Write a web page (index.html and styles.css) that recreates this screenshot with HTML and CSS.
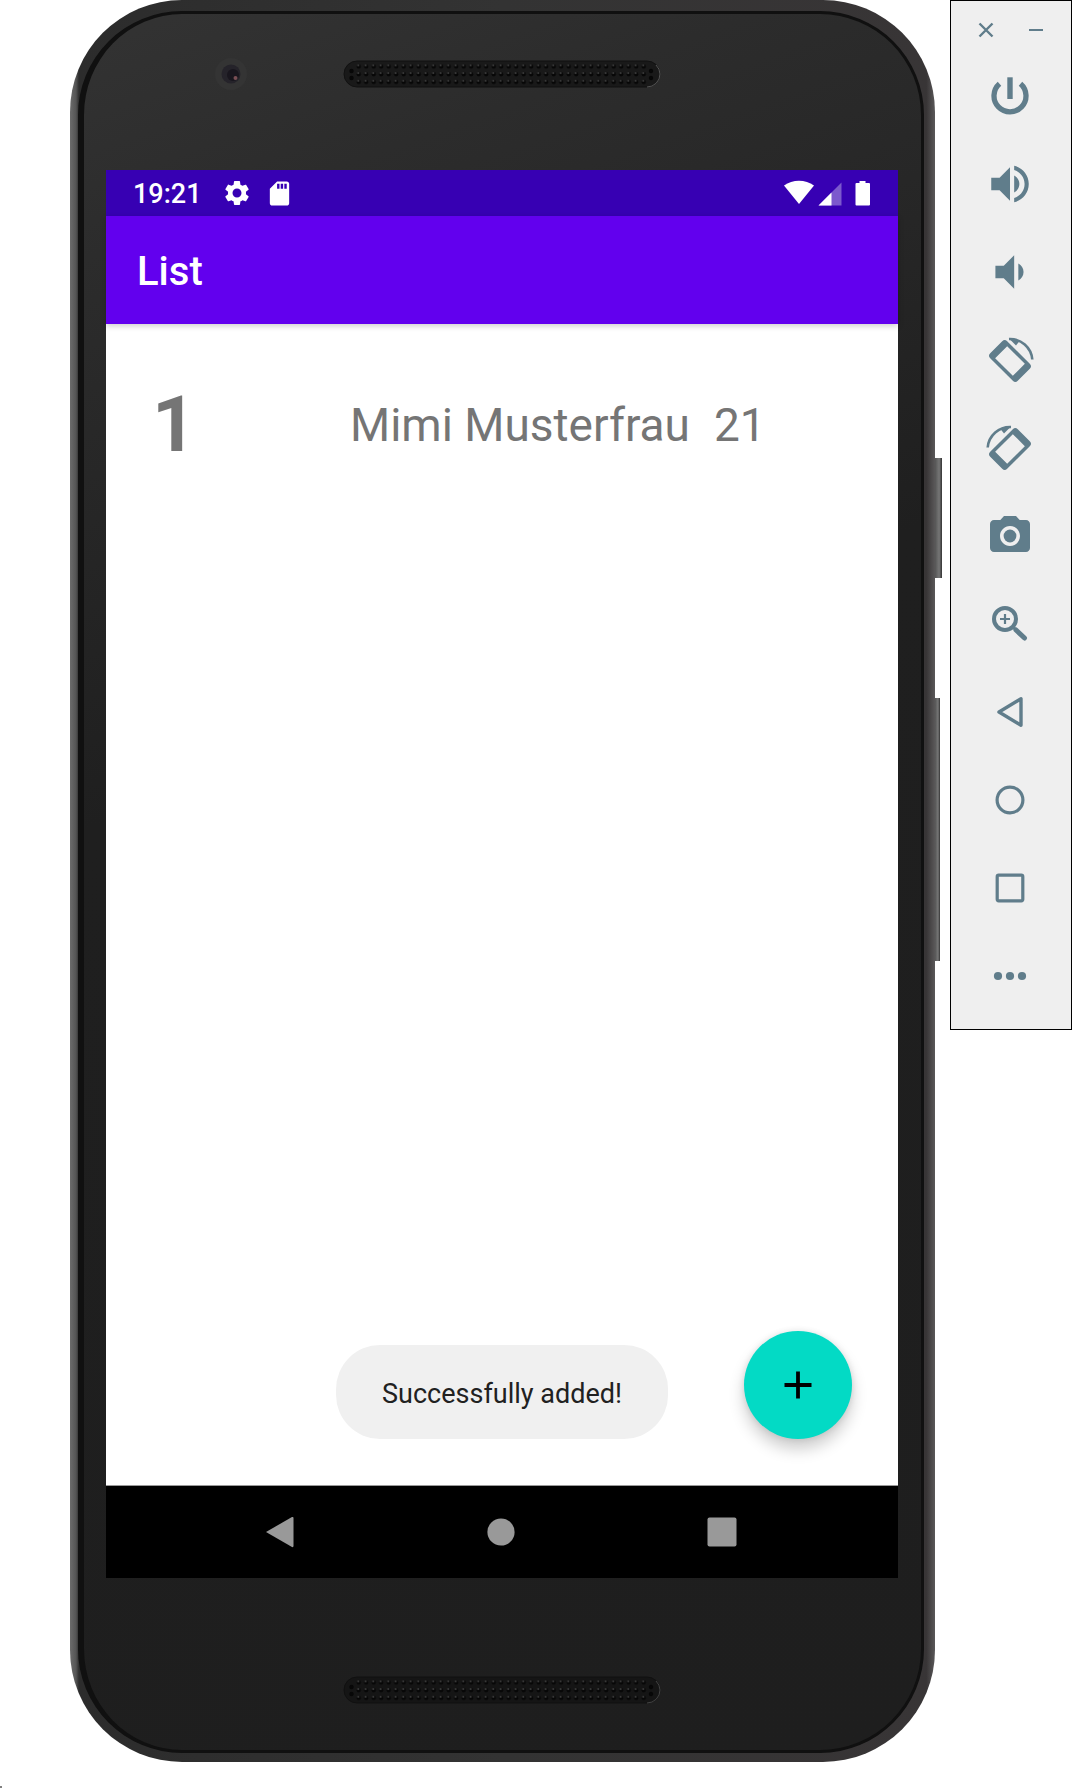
FILE: index.html
```html
<!DOCTYPE html>
<html lang="en">
<head>
<meta charset="utf-8">
<meta name="viewport" content="width=device-width, initial-scale=1">
<title>List</title>
<link rel="stylesheet" href="styles.css">
</head>
<body>
<div class="desktop">
  <div class="phone">
    <span class="side-key side-key-power"></span>
    <span class="side-key side-key-volume"></span>
    <div class="face">
      <div class="bezel bezel-top">
        <svg class="camera" width="34" height="34" viewBox="0 0 34 34" aria-hidden="true">
          <circle cx="17" cy="17" r="16" fill="#343434"/>
          <circle cx="17" cy="17" r="9.500" fill="#25232a"/>
          <circle cx="19" cy="18" r="6" fill="#19161e"/>
          <circle cx="21.500" cy="21" r="2" fill="#7a4f55"/>
        </svg>
        <svg class="speaker" width="318" height="28" viewBox="0 0 318 28" aria-hidden="true">
          <defs>
            <pattern id="holes" x="12" y="2.500" width="7.500" height="7.700" patternUnits="userSpaceOnUse">
              <circle cx="3.700" cy="4" r="2.200" fill="#070707"/>
              <circle cx="3.200" cy="2.900" r="1" fill="#444"/>
            </pattern>
          </defs>
          <rect x="1" y="1" width="316" height="26" rx="13" fill="#191919" stroke="#111"/>
          <path d="M304 27a13 13 0 0 0 13-13a13 13 0 0 0-4-9" fill="none" stroke="#555"/>
          <rect x="12" y="2.500" width="292.500" height="23.100" fill="url(#holes)"/>
          <g fill="#070707"><circle cx="8.500" cy="11" r="2.200"/><circle cx="8.500" cy="18" r="2.200"/><circle cx="308" cy="11" r="2.200"/><circle cx="308" cy="18" r="2.200"/></g>
        </svg>
      </div>
      <main class="screen">
        <div class="status-bar">
          <span class="clock">19:21</span>
          <svg class="status-gear" width="30" height="30" viewBox="0 0 24 24" fill="#fff" aria-hidden="true"><path d="M19.140 12.940c.040-.300.060-.610.060-.940 0-.320-.020-.640-.070-.940l2.030-1.580c.180-.140.230-.410.120-.610l-1.920-3.320c-.120-.220-.370-.290-.590-.220l-2.390.960c-.500-.380-1.030-.700-1.620-.940l-.360-2.540c-.040-.240-.240-.410-.480-.410h-3.840c-.240 0-.430.170-.470.410l-.360 2.540c-.590.240-1.130.570-1.620.940l-2.390-.960c-.220-.080-.470 0-.590.220L2.740 8.870c-.120.210-.080.470.120.610l2.030 1.580c-.050.300-.090.630-.090.940s.020.640.070.940l-2.030 1.580c-.180.140-.230.410-.120.610l1.920 3.320c.120.220.370.290.590.220l2.390-.960c.500.380 1.030.700 1.620.940l.360 2.540c.050.240.240.410.480.410h3.840c.240 0 .440-.170.470-.410l.360-2.540c.590-.240 1.130-.560 1.620-.940l2.390.960c.220.080.470 0 .590-.220l1.920-3.320c.120-.220.070-.470-.120-.610l-2.010-1.580zM12 15.600c-1.980 0-3.600-1.620-3.600-3.600s1.620-3.600 3.600-3.600 3.600 1.620 3.600 3.600-1.620 3.600-3.600 3.600z"/></svg>
          <svg width="29" height="29" viewBox="0 0 24 24" fill="#fff" aria-hidden="true"><path d="M18 2h-8L4 8v12c0 1.100.9 2 2 2h12c1.100 0 2-.9 2-2V4c0-1.100-.9-2-2-2zm-6 6h-2V4h2v4zm3 0h-2V4h2v4zm3 0h-2V4h2v4z"/></svg>
          <svg class="status-right" width="88" height="26" viewBox="0 0 88 26" fill="#fff" aria-hidden="true">
            <path d="M0 5.500C8.500-.8 21.500-.8 30 5.500L15 24z"/>
            <path d="M57.500 2.500V25.500H34.500z" fill-opacity=".35"/><path d="M47.500 12.500V25.500H34.500z"/>
            <path d="M75.500 1h6v2H85q1 0 1 1V24.500q0 1-1 1H72.500q-1 0-1-1V4q0-1 1-1h3z"/>
          </svg>
        </div>
        <header class="app-bar"><h1>List</h1></header>
        <section class="content">
          <ul class="people">
            <li class="person">
              <strong class="person-id">1</strong>
              <span>Mimi Musterfrau</span>
              <span>21</span>
            </li>
          </ul>
          <div class="toast" role="status">Successfully added!</div>
          <button class="fab" type="button" aria-label="Add">
            <svg width="28" height="28" viewBox="-14 -14 28 28" aria-hidden="true"><path d="M0-13.500V13.500M-13.500 0H13.500" stroke="#000" stroke-width="3.800"/></svg>
          </button>
        </section>
        <nav class="nav-bar" aria-label="System">
          <button type="button" aria-label="Back"><svg width="32" height="32" viewBox="-16 -16 32 32"><path d="M-14 0L12-15Q13.500-15.500 13.500-14V14Q13.500 15.500 12 15z" fill="#999"/></svg></button>
          <button type="button" aria-label="Home"><svg width="32" height="32" viewBox="-16 -16 32 32"><circle r="13.600" fill="#999"/></svg></button>
          <button type="button" aria-label="Overview"><svg width="32" height="32" viewBox="-16 -16 32 32"><rect x="-14.500" y="-14.500" width="29" height="29" rx="2" fill="#999"/></svg></button>
        </nav>
      </main>
      <div class="bezel bezel-bottom">
        <svg class="speaker" width="318" height="28" viewBox="0 0 318 28" aria-hidden="true">
          <rect x="1" y="1" width="316" height="26" rx="13" fill="#151515" stroke="#101010"/>
          <path d="M304 27a13 13 0 0 0 13-13a13 13 0 0 0-4-9" fill="none" stroke="#444"/>
          <rect x="12" y="2.500" width="292.500" height="23.100" fill="url(#holes)"/>
          <g fill="#070707"><circle cx="8.500" cy="11" r="2.200"/><circle cx="8.500" cy="18" r="2.200"/><circle cx="308" cy="11" r="2.200"/><circle cx="308" cy="18" r="2.200"/></g>
        </svg>
      </div>
    </div>
  </div>
  <aside class="toolbar" aria-label="Emulator controls">
    <div class="window-keys">
      <button type="button" aria-label="Close"><svg width="16" height="16" viewBox="-8 -8 16 16"><path d="M-6.500-6.500L6.500 6.500M-6.500 6.500L6.500-6.500" stroke="#607d8b" stroke-width="2.400"/></svg></button>
      <button type="button" aria-label="Minimize"><svg width="16" height="16" viewBox="-8 -8 16 16"><path d="M-7 0H7" stroke="#607d8b" stroke-width="2"/></svg></button>
    </div>
    <button class="tool" type="button" aria-label="Power"><svg width="50" height="50" viewBox="-25 -25 50 50"><path d="M-10.500-12.200A16 16 0 1 0 10.500-12.200" fill="none" stroke="#607d8b" stroke-width="5.300"/><path d="M-2.700-18.700h5.400v21.700h-5.400z"/></svg></button>
    <button class="tool" type="button" aria-label="Volume up"><svg width="50" height="50" viewBox="0 0 24 24"><path d="M3 9v6h4l5 5V4L7 9H3zm13.500 3c0-1.770-1.020-3.290-2.500-4.030v8.050c1.480-.730 2.500-2.250 2.500-4.020zM14 3.230v2.060c2.890.860 5 3.540 5 6.710s-2.110 5.850-5 6.710v2.060c4.010-.910 7-4.490 7-8.770s-2.990-7.860-7-8.770z" transform="translate(0 0)"/></svg></button>
    <button class="tool" type="button" aria-label="Volume down"><svg width="50" height="50" viewBox="0 0 24 24"><path d="M18.500 12c0-1.770-1.020-3.290-2.500-4.030v8.050c1.480-.730 2.500-2.250 2.500-4.020zM5 9v6h4l5 5V4L9 9H5z"/></svg></button>
    <button class="tool" type="button" aria-label="Rotate left"><svg width="50" height="50" viewBox="-25 -26 50 50"><path transform="rotate(45)" fill-rule="evenodd" d="M-16-12H16Q19.500-12 19.500-8.500V8.500Q19.500 12 16 12H-16Q-19.500 12-19.500 8.500V-8.500Q-19.500-12-16-12zM-12.500-8.500V8.500H12.500V-8.500z"/><path d="M-1-22A22.500 22.500 0 0 1 22.300-1.500" fill="none" stroke="#607d8b" stroke-width="2.600"/><path d="M-1-22.500L10-20.500L6-15.500z"/></svg></button>
    <button class="tool" type="button" aria-label="Rotate right"><svg width="50" height="50" viewBox="-25 -26 50 50"><g transform="scale(-1 1)"><path transform="rotate(45)" fill-rule="evenodd" d="M-16-12H16Q19.500-12 19.500-8.500V8.500Q19.500 12 16 12H-16Q-19.500 12-19.500 8.500V-8.500Q-19.500-12-16-12zM-12.500-8.500V8.500H12.500V-8.500z"/><path d="M-1-22A22.500 22.500 0 0 1 22.300-1.500" fill="none" stroke="#607d8b" stroke-width="2.600"/><path d="M-1-22.500L10-20.500L6-15.500z"/></g></svg></button>
    <button class="tool" type="button" aria-label="Take screenshot"><svg width="48" height="48" viewBox="0 0 24 24"><circle cx="12" cy="12" r="3.200"/><path d="M9 2L7.170 4H4c-1.100 0-2 .9-2 2v12c0 1.100.9 2 2 2h16c1.100 0 2-.9 2-2V6c0-1.100-.9-2-2-2h-3.170L15 2H9zm3 15c-2.760 0-5-2.240-5-5s2.240-5 5-5 5 2.240 5 5-2.240 5-5 5z"/></svg></button>
    <button class="tool" type="button" aria-label="Zoom"><svg width="50" height="50" viewBox="-25 -25 50 50" fill="none" stroke="#607d8b"><circle cx="-5" cy="-5" r="11" stroke-width="4"/><path d="M-10-5H0M-5-10V0" stroke-width="2.200"/><path d="M2.500 2.500L5.500 5.500" stroke-width="3"/><path d="M6 6L14.500 14" stroke-width="5" stroke-linecap="round"/></svg></button>
    <button class="tool" type="button" aria-label="Back"><svg width="50" height="50" viewBox="-25 -25 50 50" fill="none" stroke="#607d8b" stroke-width="3.400" stroke-linejoin="round"><path d="M-11 0L11-13.300V13.300z"/></svg></button>
    <button class="tool" type="button" aria-label="Home"><svg width="50" height="50" viewBox="-25 -25 50 50" fill="none" stroke="#607d8b" stroke-width="3.200"><circle r="12.900"/></svg></button>
    <button class="tool" type="button" aria-label="Overview"><svg width="50" height="50" viewBox="-25 -25 50 50" fill="none" stroke="#607d8b" stroke-width="3.200"><rect x="-12.800" y="-12.800" width="25.600" height="25.600" rx="1.500"/></svg></button>
    <button class="tool" type="button" aria-label="More"><svg width="50" height="50" viewBox="-25 -25 50 50"><circle cx="-12" r="4.100"/><circle r="4.100"/><circle cx="12" r="4.100"/></svg></button>
  </aside>
</div>
<div class="corner-mark"></div>
</body>
</html>
```
FILE: styles.css
```css
* { box-sizing: border-box; }

body {
  margin: 0;
  background: #fff;
  font-family: Roboto, "Liberation Sans", sans-serif;
}

button {
  padding: 0;
  border: 0;
  background: none;
  color: inherit;
  font: inherit;
  cursor: pointer;
}

svg { display: block; flex: none; }

.desktop {
  display: flex;
  align-items: flex-start;
  gap: 15px;
  padding-left: 70px;
}

/* Handset */
.phone {
  position: relative;
  flex: 1;
  min-width: 0;
  padding: 11px 11px 9px 8px;
  border-radius: 112px;
  background: linear-gradient(90deg, #6c6c6c 0, #555 6px, #2c2c2c 9px, #333 50%, #383536 99%, #5a5859 100%);
}

.side-key {
  position: absolute;
  left: 100%;
  background: linear-gradient(90deg, #555, #777 60%, #333);
}

.side-key-power { top: 458px; width: 7px; height: 120px; }
.side-key-volume { top: 698px; width: 5px; height: 263px; }

.face {
  padding: 0 23px 0 22px;
  border: 3px solid #101010;
  border-left-width: 6px;
  border-radius: 104px;
  background: linear-gradient(160deg, #333 0, #2c2c2c 12%, #1f1f1f 40%, #1e1e1e 100%);
}

.bezel { position: relative; display: flex; justify-content: center; }
.bezel-top { height: 156px; padding-top: 46px; }
.bezel-bottom { height: 172px; padding-top: 98px; }
.camera { position: absolute; top: 43px; left: 108px; }

/* Screen */
.screen { display: flex; flex-direction: column; background: #fff; }

.status-bar {
  display: flex;
  align-items: center;
  height: 46px;
  padding: 0 26px 0 27px;
  background: #3700b3;
  color: #fff;
}

.clock { padding-top: 2px; font-size: 27px; font-weight: 500; line-height: 44px; }
.status-gear { margin: 0 13px 0 20px; }
.status-right { margin-left: auto; }

.app-bar {
  position: relative;
  display: flex;
  align-items: center;
  height: 108px;
  padding: 4px 31px 0;
  background: #6200ee;
  box-shadow: 0 2px 6px rgba(0, 0, 0, 0.2);
  color: #fff;
}

.app-bar h1 { margin: 0; font-size: 40px; font-weight: 500; line-height: 46px; }

.content { position: relative; height: 1161px; padding: 56px 46px; }

.people { margin: 0; padding: 0; list-style: none; }

.person {
  display: grid;
  grid-template-columns: 198px 364px 1fr;
  align-items: center;
  color: #757575;
  font-size: 46px;
  line-height: 90px;
}

.person-id { font-size: 77px; font-weight: 700; }

.toast {
  position: absolute;
  bottom: 46px;
  left: 50%;
  transform: translateX(-50%);
  padding: 33px 46px 29px;
  border-radius: 44px;
  background: #f0f0f0;
  color: #212121;
  font-size: 27px;
  line-height: 32px;
  white-space: nowrap;
}

.fab {
  position: absolute;
  right: 46px;
  bottom: 46px;
  display: grid;
  place-items: center;
  width: 108px;
  height: 108px;
  border-radius: 50%;
  background: #03dac5;
  box-shadow: 0 10px 16px rgba(0, 0, 0, 0.2), 0 0 6px rgba(0, 0, 0, 0.1);
}

.nav-bar {
  display: flex;
  justify-content: space-between;
  align-items: center;
  height: 93px;
  padding: 0 160px 0 158px;
  border-top: 1px solid #999;
  background: #000;
}

/* Emulator side panel */
.toolbar {
  display: flex;
  flex-direction: column;
  flex: 0 0 122px;
  padding: 8px 0 9px;
  border: 1px solid #000;
  background: #efefef;
}

.window-keys {
  display: flex;
  gap: 34px;
  height: 43px;
  padding: 0 0 1px 27px;
}

.tool {
  display: grid;
  place-items: center;
  height: 88px;
  padding-right: 2px;
  fill: #607d8b;
}

.corner-mark { width: 2px; height: 2px; margin-top: 24px; background: #808080; }
```
